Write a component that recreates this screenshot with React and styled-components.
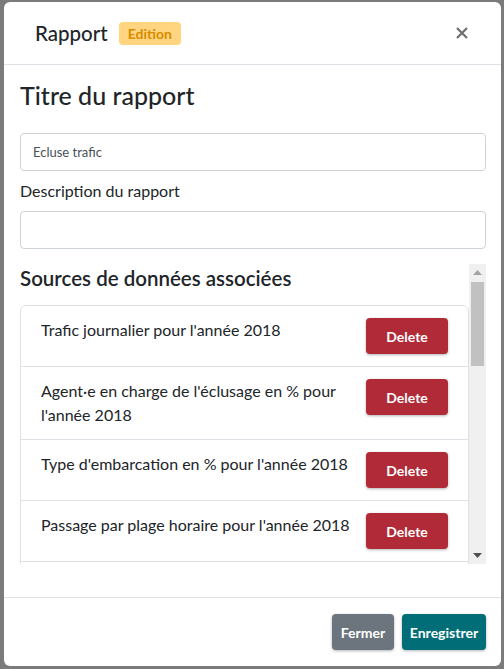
import React from 'react'
import styled, { createGlobalStyle } from 'styled-components'

const GlobalStyle = createGlobalStyle`
  html, body {
    margin: 0;
    padding: 0;
  }
  body {
    font-family: Lato, "Open Sans", sans-serif;
    color: #212529;
    background: #7b7b7b;
  }
  * {
    box-sizing: border-box;
  }
`

const Backdrop = styled.div`
  width: 504px;
  height: 669px;
  background: #7b7b7b;
  padding: 2px 3px 3px 4px;
  overflow: hidden;
`

const Modal = styled.div`
  background: #fff;
  border-radius: 6px;
  height: 664px;
  display: flex;
  flex-direction: column;
  overflow: hidden;
`

const Header = styled.header`
  height: 63px;
  flex: none;
  border-bottom: 1px solid #dee2e6;
  display: flex;
  align-items: center;
  padding: 0 33px 0 31px;
`

const ModalTitle = styled.h5`
  margin: 0;
  font-size: 20.5px;
  font-weight: 500;
  line-height: 30px;
`

const Badge = styled.span`
  margin-left: 11px;
  height: 23px;
  padding: 0 9px;
  display: inline-flex;
  align-items: center;
  background: #ffd57f;
  color: #d98b00;
  font-size: 14px;
  font-weight: 700;
  border-radius: 4px;
`

const CloseButton = styled.button`
  margin-left: auto;
  width: 12px;
  height: 12px;
  padding: 0;
  border: none;
  background: none;
  display: flex;
  cursor: pointer;
`

const Body = styled.div`
  flex: 1;
  padding: 16px 15px 0 16px;
  display: flex;
  flex-direction: column;
`

const SectionTitle = styled.h4`
  margin: 0;
  font-size: 25px;
  font-weight: 500;
  line-height: 29px;
`

const Input = styled.input`
  display: block;
  width: 100%;
  height: 38px;
  margin-top: ${({ $gap }) => $gap}px;
  padding: 0 12px;
  border: 1px solid #ced4da;
  border-radius: 4px;
  font-family: inherit;
  font-size: ${({ $small }) => ($small ? '13px' : '16px')};
  color: #495057;
  outline: none;
`

const Label = styled.label`
  display: block;
  margin-top: 8px;
  font-size: 16px;
  line-height: 24px;
`

const ScrollArea = styled.div`
  margin-top: 15px;
  height: 300px;
  display: flex;
`

const ScrollContent = styled.div`
  flex: 1;
  min-width: 0;
  overflow: hidden;
  padding-top: 2px;
`

const ScrollTrack = styled.div`
  flex: none;
  width: 17px;
  background: #f0f0f0;
  display: flex;
  flex-direction: column;
`

const ScrollArrow = styled.div`
  height: 17px;
  display: flex;
  align-items: center;
  justify-content: center;
`

const ScrollThumb = styled.div`
  height: 84px;
  margin: 1px 2px 0;
  background: #c1c1c1;
`

const ScrollSpacer = styled.div`
  flex: 1;
`

const ListTitle = styled.h5`
  margin: 0 0 15px;
  font-size: 20.5px;
  font-weight: 600;
  line-height: 24px;
`

const ListGroup = styled.ul`
  margin: 0;
  padding: 0;
  list-style: none;
  border: 1px solid #dee2e6;
  border-radius: 6px;
`

const ListItem = styled.li`
  display: flex;
  align-items: flex-start;
  gap: 12px;
  padding: 12px 20px;
  border-top: 1px solid #dee2e6;
  font-size: 16px;
  line-height: 24px;

  &:first-child {
    border-top: none;
  }
`

const ItemText = styled.span`
  flex: 1;
`

const Button = styled.button`
  flex: none;
  width: ${({ $width }) => $width}px;
  height: 36px;
  padding: 0;
  border: none;
  border-radius: 4px;
  background: ${({ $color }) => $color};
  color: #fff;
  font-family: inherit;
  font-size: 14px;
  font-weight: 700;
  box-shadow: 0 1px 3px rgba(0, 0, 0, 0.3);
  cursor: pointer;
`

const Footer = styled.footer`
  flex: none;
  border-top: 1px solid #dee2e6;
  padding: 16px 15px 16px;
  display: flex;
  justify-content: flex-end;
  gap: 8px;
`

const sources = [
  "Trafic journalier pour l'année 2018",
  "Agent·e en charge de l'éclusage en % pour l'année 2018",
  "Type d'embarcation en % pour l'année 2018",
  "Passage par plage horaire pour l'année 2018",
  "Trafic mensuel pour l'année 2018",
  "Trafic hebdomadaire pour l'année 2018",
]

export default function App() {
  return (
    <>
      <GlobalStyle />
      <Backdrop>
        <Modal>
          <Header>
            <ModalTitle>Rapport</ModalTitle>
            <Badge>Edition</Badge>
            <CloseButton aria-label="Fermer">
              <svg width="12" height="12" viewBox="0 0 12 12">
                <path d="M1 1L11 11M11 1L1 11" stroke="#6f6f6f" strokeWidth="2.2" />
              </svg>
            </CloseButton>
          </Header>
          <Body>
            <SectionTitle>Titre du rapport</SectionTitle>
            <Input $gap={23} $small defaultValue="Ecluse trafic" />
            <Label>Description du rapport</Label>
            <Input $gap={8} />
            <ScrollArea>
              <ScrollContent>
                <ListTitle>Sources de données associées</ListTitle>
                <ListGroup>
                  {sources.map((s) => (
                    <ListItem key={s}>
                      <ItemText>{s}</ItemText>
                      <Button $color="#b02a37" $width={82}>Delete</Button>
                    </ListItem>
                  ))}
                </ListGroup>
              </ScrollContent>
              <ScrollTrack>
                <ScrollArrow>
                  <svg width="9" height="5" viewBox="0 0 9 5">
                    <polygon points="4.5,0 9,5 0,5" fill="#a3a3a3" />
                  </svg>
                </ScrollArrow>
                <ScrollThumb />
                <ScrollSpacer />
                <ScrollArrow>
                  <svg width="9" height="5" viewBox="0 0 9 5">
                    <polygon points="0,0 9,0 4.5,5" fill="#505050" />
                  </svg>
                </ScrollArrow>
              </ScrollTrack>
            </ScrollArea>
          </Body>
          <Footer>
            <Button $color="#6c757d" $width={62}>Fermer</Button>
            <Button $color="#006d77" $width={84}>Enregistrer</Button>
          </Footer>
        </Modal>
      </Backdrop>
    </>
  )
}
